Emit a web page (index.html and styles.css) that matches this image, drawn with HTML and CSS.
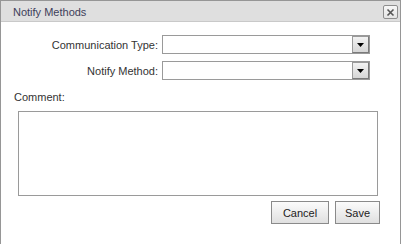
FILE: index.html
```html
<!DOCTYPE html>
<html>
<head>
<meta charset="utf-8">
<link rel="stylesheet" href="styles.css">
</head>
<body>
<div class="dialog">
  <div class="titlebar">
    <span class="title">Notify Methods</span>
    <span class="close"><svg width="9" height="9" viewBox="0 0 9 9"><path d="M1.5 1.5 L7.5 7.5 M7.5 1.5 L1.5 7.5" stroke="#555" stroke-width="1.6"/></svg></span>
  </div>
  <div class="content">
    <div class="row">
      <label class="label">Communication Type:</label>
      <div class="select"><span class="arrow"><svg width="7" height="4" viewBox="0 0 7 4"><path d="M0 0 H7 L3.5 4 Z" fill="#000"/></svg></span></div>
    </div>
    <div class="row row2">
      <label class="label">Notify Method:</label>
      <div class="select"><span class="arrow"><svg width="7" height="4" viewBox="0 0 7 4"><path d="M0 0 H7 L3.5 4 Z" fill="#000"/></svg></span></div>
    </div>
    <div class="comment-label">Comment:</div>
    <div class="textarea"></div>
    <div class="buttons">
      <button class="btn btn-cancel">Cancel</button>
      <button class="btn btn-save">Save</button>
    </div>
  </div>
</div>
</body>
</html>
```

FILE: styles.css
```css
html, body {
  margin: 0;
  padding: 0;
  background: #fff;
}
.dialog {
  box-sizing: border-box;
  width: 401px;
  height: 244px;
  border: 1px solid #969696;
  border-bottom: none;
  font-family: "Liberation Sans", Arial, sans-serif;
  font-size: 11px;
  color: #333;
  background: #fff;
}
.titlebar {
  height: 20px;
  background: #dfdfdf;
  border-bottom: 1px solid #c9c9c9;
  display: flex;
  align-items: center;
  justify-content: space-between;
  padding: 0 2px 0 12px;
}
.title {
  color: #3e3e5a;
  font-size: 11px;
  padding-top: 1px;
}
.close {
  box-sizing: border-box;
  width: 15px;
  height: 14px;
  border: 1px solid #8e8e8e;
  border-radius: 2px;
  background: linear-gradient(#f7f7f7, #e4e4e4);
  display: flex;
  align-items: center;
  justify-content: center;
  margin-top: 2px;
}
.close svg { display: block; }
.content {
  padding: 13px 0 0 17px;
}
.row {
  display: flex;
  align-items: center;
  height: 19px;
}
.row2 {
  margin-top: 7px;
}
.label {
  width: 140px;
  text-align: right;
  padding-right: 4px;
  color: #333;
}
.select {
  box-sizing: border-box;
  width: 208px;
  height: 19px;
  border: 1px solid #9a9a9a;
  background: #fff;
  display: flex;
  justify-content: flex-end;
}
.arrow {
  box-sizing: border-box;
  width: 17px;
  height: 17px;
  border: 1px solid #7a7a7a;
  border-top-color: #9a9a9a;
  border-left-color: #9a9a9a;
  background: linear-gradient(#f2f2f2, #d6d6d6);
  display: flex;
  align-items: center;
  justify-content: center;
}
.arrow svg { display: block; margin-top: 1px; }
.comment-label {
  margin-top: 10px;
  margin-left: -4px;
  height: 14px;
  line-height: 14px;
}
.textarea {
  box-sizing: border-box;
  margin-top: 7px;
  width: 360px;
  height: 85px;
  border: 1px solid #9a9a9a;
  background: #fff;
}
.buttons {
  display: flex;
  justify-content: flex-end;
  gap: 6px;
  width: 362px;
  margin-top: 5px;
}
.btn {
  box-sizing: border-box;
  height: 23px;
  border: 1px solid #8a8a8a;
  background: linear-gradient(#fbfbfb, #e0e0e0);
  font-family: "Liberation Sans", Arial, sans-serif;
  font-size: 11px;
  color: #222;
  padding: 0;
  margin: 0;
}
.btn-cancel { width: 58px; }
.btn-save { width: 45px; }
```
